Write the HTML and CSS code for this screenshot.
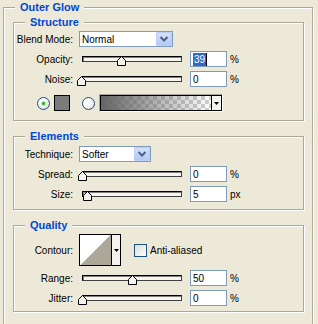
FILE: index.html
```html
<!DOCTYPE html>
<html lang="en">

<head>
    <meta charset="UTF-8">
    <title>Outer Glow</title>
    <link rel="stylesheet" href="styles.css">
</head>

<body>
    <fieldset class="group outer">
        <legend>Outer Glow</legend>

        <fieldset class="group structure">
            <legend>Structure</legend>
            <div class="row">
                <label class="lbl">Blend Mode:</label>
                <div class="select blend">
                    <span class="val">Normal</span>
                    <span class="drop"><svg width="14" height="12" viewBox="0 0 14 12"><polyline points="3.5,4 7,7.5 10.5,4" fill="none" stroke="#4d6185" stroke-width="2"/></svg></span>
                </div>
            </div>
            <div class="row">
                <label class="lbl">Opacity:</label>
                <div class="slider">
                    <div class="track"></div>
                    <svg class="thumb" style="left:38px" width="10" height="10" viewBox="0 0 10 10"><polygon points="0.5,4.5 4.5,0.5 8.5,4.5 8.5,9.5 0.5,9.5" fill="#f4f3ee" stroke="#000"/></svg>
                </div>
                <div class="field"><span class="sel">39</span><span class="caret"></span></div>
                <span class="unit">%</span>
            </div>
            <div class="row">
                <label class="lbl">Noise:</label>
                <div class="slider">
                    <div class="track"></div>
                    <svg class="thumb" style="left:-2px" width="10" height="10" viewBox="0 0 10 10"><polygon points="0.5,4.5 4.5,0.5 8.5,4.5 8.5,9.5 0.5,9.5" fill="#f4f3ee" stroke="#000"/></svg>
                </div>
                <div class="field">0</div>
                <span class="unit">%</span>
            </div>
            <div class="row colors">
                <span class="radio on"></span>
                <span class="swatch"></span>
                <span class="radio second"></span>
                <div class="gradient">
                    <div class="grad-in">
                        <span class="ramp"></span>
                        <span class="grad-btn"><svg width="5" height="3" viewBox="0 0 5 3"><polygon points="0,0 5,0 2.5,3" fill="#000"/></svg></span>
                    </div>
                </div>
            </div>
        </fieldset>

        <fieldset class="group elements">
            <legend>Elements</legend>
            <div class="row">
                <label class="lbl">Technique:</label>
                <div class="select technique">
                    <span class="val">Softer</span>
                    <span class="drop"><svg width="14" height="12" viewBox="0 0 14 12"><polyline points="3.5,4 7,7.5 10.5,4" fill="none" stroke="#4d6185" stroke-width="2"/></svg></span>
                </div>
            </div>
            <div class="row">
                <label class="lbl">Spread:</label>
                <div class="slider">
                    <div class="track"></div>
                    <svg class="thumb" style="left:-1px" width="10" height="10" viewBox="0 0 10 10"><polygon points="0.5,4.5 4.5,0.5 8.5,4.5 8.5,9.5 0.5,9.5" fill="#f4f3ee" stroke="#000"/></svg>
                </div>
                <div class="field">0</div>
                <span class="unit">%</span>
            </div>
            <div class="row">
                <label class="lbl">Size:</label>
                <div class="slider">
                    <div class="track"></div>
                    <svg class="thumb" style="left:4px" width="10" height="10" viewBox="0 0 10 10"><polygon points="0.5,4.5 4.5,0.5 8.5,4.5 8.5,9.5 0.5,9.5" fill="#f4f3ee" stroke="#000"/></svg>
                </div>
                <div class="field">5</div>
                <span class="unit">px</span>
            </div>
        </fieldset>

        <fieldset class="group quality">
            <legend>Quality</legend>
            <div class="row tall">
                <label class="lbl">Contour:</label>
                <div class="contour">
                    <span class="curve"></span>
                    <span class="curve-btn"><svg width="5" height="3" viewBox="0 0 5 3"><polygon points="0,0 5,0 2.5,3" fill="#000"/></svg></span>
                </div>
                <span class="check"></span>
                <span class="check-lbl">Anti-aliased</span>
            </div>
            <div class="row">
                <label class="lbl">Range:</label>
                <div class="slider">
                    <div class="track"></div>
                    <svg class="thumb" style="left:49px" width="10" height="10" viewBox="0 0 10 10"><polygon points="0.5,4.5 4.5,0.5 8.5,4.5 8.5,9.5 0.5,9.5" fill="#f4f3ee" stroke="#000"/></svg>
                </div>
                <div class="field">50</div>
                <span class="unit">%</span>
            </div>
            <div class="row">
                <label class="lbl">Jitter:</label>
                <div class="slider">
                    <div class="track"></div>
                    <svg class="thumb" style="left:-1px" width="10" height="10" viewBox="0 0 10 10"><polygon points="0.5,4.5 4.5,0.5 8.5,4.5 8.5,9.5 0.5,9.5" fill="#f4f3ee" stroke="#000"/></svg>
                </div>
                <div class="field">0</div>
                <span class="unit">%</span>
            </div>
        </fieldset>
    </fieldset>
</body>

</html>
```

FILE: styles.css
```css
html,
body {
    margin: 0;
    overflow: hidden;
}

body {
    width: 318px;
    height: 324px;
    background: #ece9d8;
    font-family: "Liberation Sans", Arial, sans-serif;
    font-size: 10px;
    color: #000;
}

/* etched group boxes */
.group {
    margin: 9px 8px 0 9px;
    padding: 0;
    min-width: 0;
    border: 1px solid #aca899;
    box-shadow: 1px 1px 0 #fff, inset 1px 1px 0 #fff;
}

.group legend {
    margin-left: 11px;
    padding: 0 5px;
    font: bold 11px/13px "Liberation Sans", Arial, sans-serif;
    color: #0046d5;
    background: #ece9d8;
}

/* the outer box runs on below the window */
.outer {
    margin: 1px 5px 0 3px;
    padding-bottom: 12px;
}

.structure {
    margin-top: 2px;
    padding: 2px 0 9px;
}

.elements {
    padding: 3px 0 7px;
}

.quality {
    padding: 2px 0 5px;
}

.row {
    display: flex;
    align-items: center;
    height: 16px;
    margin-top: 4px;
}

.row:first-child,
legend + .row {
    margin-top: 0;
}

.row.tall {
    height: 32px;
}

.lbl {
    flex: none;
    width: 59px;
    margin-right: 6px;
    text-align: right;
}

/* combo boxes */
.select {
    box-sizing: border-box;
    height: 16px;
    display: flex;
    align-items: center;
    border: 1px solid #7f9db9;
    background: #fff;
}

.select.blend {
    width: 94px;
}

.select.technique {
    width: 72px;
}

.select .val {
    padding-left: 2px;
}

.drop {
    margin-left: auto;
    box-sizing: border-box;
    width: 16px;
    height: 14px;
    display: flex;
    align-items: center;
    justify-content: center;
    border: 1px solid #bccdf5;
    border-radius: 1px;
    background: linear-gradient(#d4e0fc, #b4c8f6);
}

/* sliders */
.slider {
    flex: none;
    position: relative;
    width: 105px;
    height: 16px;
    margin-right: 6px;
}

.track {
    box-sizing: border-box;
    width: 100px;
    height: 6px;
    margin: 5px 0 0 3px;
    border: 1px solid #000;
    border-right-color: #404040;
    border-bottom-color: #404040;
    box-shadow: inset 1px 1px 0 #808080;
    background: #f6f5ee;
}

.thumb {
    position: absolute;
    top: 5px;
}

/* numeric fields */
.field {
    box-sizing: border-box;
    width: 37px;
    height: 16px;
    display: flex;
    align-items: center;
    padding-left: 2px;
    border: 1px solid #7f9db9;
    background: #fff;
}

.field .sel {
    height: 13px;
    line-height: 13px;
    padding: 0 1px;
    background: #316ac5;
    color: #fff;
}

.field .caret {
    width: 1px;
    height: 13px;
    background: #000;
}

.unit {
    margin-left: 3px;
}

/* colour row */
.row.colors {
    margin-top: 8px;
}

.radio {
    flex: none;
    box-sizing: border-box;
    width: 13px;
    height: 13px;
    border: 1px solid #1c5180;
    border-radius: 50%;
    background: radial-gradient(circle at 35% 35%, #fff 30%, #d6d4cb 100%);
}

.radio.on {
    margin-left: 23px;
    background: radial-gradient(circle, #21a121 0, #4ccf4c 1.5px, transparent 2.5px), radial-gradient(circle at 35% 35%, #fff 30%, #d6d4cb 100%);
}

.radio.second {
    margin-left: 12px;
}

.swatch {
    flex: none;
    box-sizing: border-box;
    width: 16px;
    height: 16px;
    margin-left: 4px;
    border: 1px solid #000;
    background: #7b7b7b;
}

.gradient {
    flex: none;
    box-sizing: border-box;
    width: 124px;
    height: 18px;
    margin-left: 4px;
    display: flex;
    border: 1px solid;
    border-color: #aca899 #fff #fff #aca899;
}

.grad-in {
    flex: 1;
    display: flex;
    border: 1px solid #000;
}

.ramp {
    flex: 1;
    background: linear-gradient(to right, rgba(100, 100, 100, 1), rgba(100, 100, 100, 0)),
        conic-gradient(#cfcfcf 25%, #fff 0 50%, #cfcfcf 0 75%, #fff 0) 0 0 / 8px 8px;
}

.grad-btn {
    width: 9px;
    display: flex;
    align-items: center;
    justify-content: center;
    border-left: 1px solid #000;
    background: #f4f3ee;
}

/* contour picker */
.contour {
    flex: none;
    box-sizing: border-box;
    width: 42px;
    height: 32px;
    display: flex;
    border: 1px solid #000;
}

.curve {
    width: 31px;
    border-right: 1px solid #000;
    background: linear-gradient(to bottom right, #fff 50%, #aca899 50%);
}

.curve-btn {
    flex: 1;
    display: flex;
    align-items: center;
    justify-content: center;
    background: #f4f3ee;
}

.check {
    flex: none;
    box-sizing: border-box;
    width: 13px;
    height: 13px;
    margin-left: 13px;
    border: 1px solid #1c5180;
    background: linear-gradient(135deg, #dcdbd5, #fff);
}

.check-lbl {
    margin-left: 3px;
}
```
